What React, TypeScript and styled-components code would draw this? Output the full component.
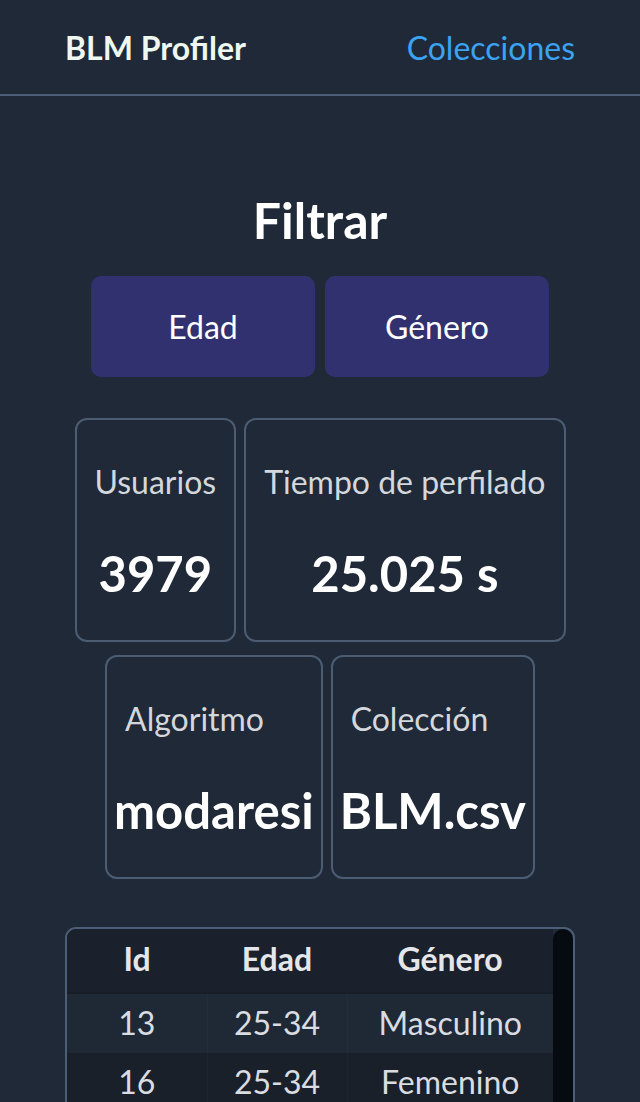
import React from "react";
import styled, { createGlobalStyle } from "styled-components";

const GlobalStyle = createGlobalStyle`
  html, body {
    margin: 0;
    padding: 0;
    background: #1f2937;
  }
  body {
    font-family: Lato, "Noto Sans", sans-serif;
    color: #ffffff;
  }
  * { box-sizing: border-box; }
`;

const Page = styled.div`
  min-height: 100vh;
  background: #1f2937;
`;

const NavBar = styled.nav`
  height: 96px;
  padding: 0 65px;
  display: flex;
  align-items: center;
  justify-content: space-between;
  border-bottom: 2px solid #4d5f77;
`;

const Brand = styled.span`
  font-size: 32px;
  font-weight: 700;
  color: #eef7f0;
`;

const NavLink = styled.a`
  font-size: 32px;
  color: #3ba3f2;
  text-decoration: none;
`;

const Main = styled.main`
  display: flex;
  flex-direction: column;
  align-items: center;
  padding: 100px 0 60px;
`;

const Title = styled.h1`
  margin: 0;
  font-size: 50px;
  line-height: 49px;
  font-weight: 700;
  color: #ffffff;
`;

const FilterRow = styled.div`
  display: flex;
  gap: 10px;
  margin-top: 31px;
`;

const FilterButton = styled.button`
  width: 224px;
  height: 101px;
  border: none;
  border-radius: 10px;
  background: #32316f;
  color: #ffffff;
  font-family: inherit;
  font-size: 32px;
  cursor: pointer;
`;

const StatsGrid = styled.div`
  display: flex;
  flex-wrap: wrap;
  justify-content: center;
  column-gap: 8px;
  row-gap: 13px;
  margin-top: 41px;
  width: 600px;
`;

const StatCard = styled.div`
  height: 224px;
  display: flex;
  flex-direction: column;
  justify-content: space-between;
  padding: 46px 0 42px;
  border: 2px solid #4b5c73;
  border-radius: 12px;
  background: #1f2937;
`;

const StatLabel = styled.div`
  padding: 0 18px;
  font-size: 32px;
  line-height: 32px;
  color: #d4d7dc;
  white-space: nowrap;
  text-align: left;
`;

const StatValue = styled.div`
  padding: 0 7px;
  font-size: 49px;
  line-height: 49px;
  font-weight: 700;
  color: #ffffff;
  white-space: nowrap;
  text-align: center;
`;

const TableFrame = styled.div`
  margin-top: 48px;
  width: 510px;
  display: flex;
  border: 2px solid #4b5e76;
  border-radius: 11px;
  overflow: hidden;
`;

const TableArea = styled.div`
  flex: 1;
`;

const ScrollThumb = styled.div`
  width: 20px;
  flex: none;
  background: #060b11;
  border-radius: 10px 10px 0 0;
`;

const DataTable = styled.table`
  width: 100%;
  border-collapse: collapse;
  table-layout: fixed;
`;

const HeadRow = styled.tr`
  background: #1a212c;
  border-bottom: 2px solid #181e27;
`;

const HeadCell = styled.th`
  height: 64px;
  padding: 0 0 4px;
  font-size: 32px;
  font-weight: 700;
  color: #e4e6e9;
  text-align: center;
`;

const Row = styled.tr<{ $odd: boolean }>`
  background: ${(p) => (p.$odd ? "#1f2936" : "#19202a")};
`;

const Cell = styled.td`
  height: 60px;
  padding: 0 0 3px;
  font-size: 32px;
  color: #d9dce0;
  text-align: center;
  & + & {
    border-left: 1px solid rgba(255, 255, 255, 0.02);
  }
`;

const stats = [
  { label: "Usuarios", value: "3979" },
  { label: "Tiempo de perfilado", value: "25.025 s" },
  { label: "Algoritmo", value: "modaresi" },
  { label: "Colección", value: "BLM.csv" },
];

const rows = [
  ["13", "25-34", "Masculino"],
  ["16", "25-34", "Femenino"],
  ["21", "18-24", "Femenino"],
  ["27", "35-49", "Masculino"],
  ["30", "25-34", "Masculino"],
];

export default function App() {
  return (
    <Page>
      <GlobalStyle />
      <NavBar>
        <Brand>BLM Profiler</Brand>
        <NavLink href="#">Colecciones</NavLink>
      </NavBar>
      <Main>
        <Title>Filtrar</Title>
        <FilterRow>
          <FilterButton>Edad</FilterButton>
          <FilterButton>Género</FilterButton>
        </FilterRow>
        <StatsGrid>
          {stats.map((s) => (
            <StatCard key={s.label}>
              <StatLabel>{s.label}</StatLabel>
              <StatValue>{s.value}</StatValue>
            </StatCard>
          ))}
        </StatsGrid>
        <TableFrame>
          <TableArea>
            <DataTable>
              <colgroup>
                <col style={{ width: 140 }} />
                <col style={{ width: 140 }} />
                <col />
              </colgroup>
              <thead>
                <HeadRow>
                  <HeadCell>Id</HeadCell>
                  <HeadCell>Edad</HeadCell>
                  <HeadCell>Género</HeadCell>
                </HeadRow>
              </thead>
              <tbody>
                {rows.map((r, i) => (
                  <Row key={r[0]} $odd={i % 2 === 0}>
                    {r.map((c, j) => (
                      <Cell key={j}>{c}</Cell>
                    ))}
                  </Row>
                ))}
              </tbody>
            </DataTable>
          </TableArea>
          <ScrollThumb />
        </TableFrame>
      </Main>
    </Page>
  );
}
